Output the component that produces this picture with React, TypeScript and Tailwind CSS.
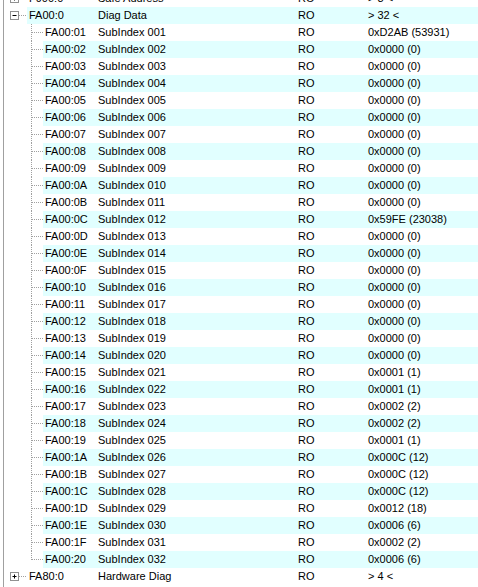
const subValues = [
  "0xD2AB (53931)", "0x0000 (0)", "0x0000 (0)", "0x0000 (0)", "0x0000 (0)", "0x0000 (0)",
  "0x0000 (0)", "0x0000 (0)", "0x0000 (0)", "0x0000 (0)", "0x0000 (0)", "0x59FE (23038)",
  "0x0000 (0)", "0x0000 (0)", "0x0000 (0)", "0x0000 (0)", "0x0000 (0)", "0x0000 (0)",
  "0x0000 (0)", "0x0000 (0)", "0x0001 (1)", "0x0001 (1)", "0x0002 (2)", "0x0002 (2)",
  "0x0001 (1)", "0x000C (12)", "0x000C (12)", "0x000C (12)", "0x0012 (18)", "0x0006 (6)",
  "0x0002 (2)", "0x0006 (6)",
];

type Row = {
  id: string;
  name: string;
  access: string;
  value: string;
  level: 0 | 1;
  expand?: "plus" | "minus";
  last?: boolean;
};

const rows: Row[] = [
  { id: "F900:0", name: "Safe Address", access: "RO", value: "> 3 <", level: 0, expand: "plus" },
  { id: "FA00:0", name: "Diag Data", access: "RO", value: "> 32 <", level: 0, expand: "minus" },
  ...subValues.map((v, i) => ({
    id: "FA00:" + (i + 1).toString(16).toUpperCase().padStart(2, "0"),
    name: "SubIndex " + String(i + 1).padStart(3, "0"),
    access: "RO",
    value: v,
    level: 1 as const,
    last: i === subValues.length - 1,
  })),
  { id: "FA80:0", name: "Hardware Diag", access: "RO", value: "> 4 <", level: 0, expand: "plus" },
];

function TreeLines({ row }: { row: Row }) {
  if (row.level === 1) {
    return (
      <svg width="43" height="17" className="shrink-0">
        <line x1="31.5" y1="0" x2="31.5" y2={row.last ? 9 : 17} stroke="#a0a0a0" strokeDasharray="1 1" />
        <line x1="32" y1="8.5" x2="43" y2="8.5" stroke="#a0a0a0" strokeDasharray="1 1" />
      </svg>
    );
  }
  return (
    <svg width="27" height="17" className="shrink-0">
      <line x1="19" y1="8.5" x2="27" y2="8.5" stroke="#a0a0a0" strokeDasharray="1 1" />
      <rect x="10.5" y="4.5" width="8" height="8" fill="#fff" stroke="#919191" />
      <line x1="12.5" y1="8.5" x2="16.5" y2="8.5" stroke="#000" />
      {row.expand === "plus" && <line x1="14.5" y1="6.5" x2="14.5" y2="10.5" stroke="#000" />}
    </svg>
  );
}

export default function App() {
  return (
    <div
      className="relative w-[478px] h-[587px] overflow-hidden bg-white text-[11px] text-[#000]"
      style={{ fontFamily: '"Liberation Sans", Arial, sans-serif' }}
    >
      <div className="absolute left-[3px] top-0 bottom-0 w-px bg-[#a0a0a0]" />
      <div className="flex flex-col mt-[-10px]">
        {rows.map((row, i) => {
          const shaded = i % 2 === 1;
          return (
            <div key={row.id} className="flex h-[17px] items-center">
              <TreeLines row={row} />
              <div className={`flex flex-1 h-full items-center leading-none ${shaded ? "bg-[#e1ffff]" : ""}`}>
                <div className={`pl-[2px] shrink-0 ${row.level === 1 ? "w-[55px]" : "w-[71px]"}`}>{row.id}</div>
                <div className="w-[200px] shrink-0">{row.name}</div>
                <div className="w-[70px] shrink-0">{row.access}</div>
                <div className="flex-1">{row.value}</div>
              </div>
            </div>
          );
        })}
      </div>
    </div>
  );
}
